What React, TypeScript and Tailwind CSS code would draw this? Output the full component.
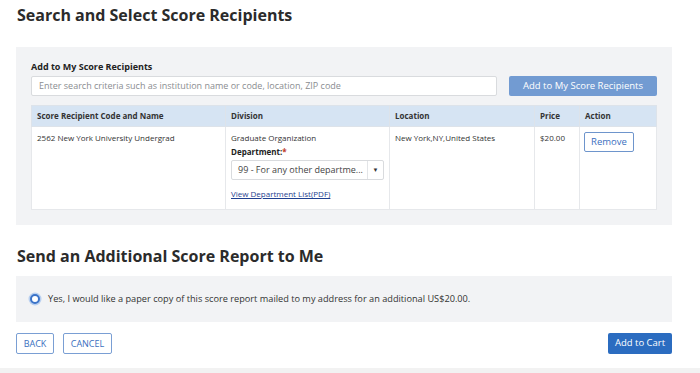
import React from 'react';

const font = { fontFamily: '"Open Sans", "Liberation Sans", sans-serif' };

const App: React.FC = () => {
  return (
    <div className="w-[700px] h-[373px] bg-white text-[#333] flex flex-col overflow-hidden" style={font}>
      <div className="px-4 flex flex-col">
        <h1 className="text-[16px] font-bold text-[#2b2b2b] pl-px pt-[4px] leading-[22px]">Search and Select Score Recipients</h1>

        <div className="mt-[21px] bg-[#f2f3f5] px-[15px] pt-[13px] pb-[15px] w-[656px]">
          <label className="block text-[9px] font-bold text-[#222] leading-[14px]">Add to My Score Recipients</label>
          <div className="flex items-center gap-3 mt-[2px]">
            <div className="w-[466px] h-[20px] bg-white border border-[#d9dbde] rounded-[2px] flex items-center px-[7px] text-[9px] text-[#8a8d91]">
              Enter search criteria such as institution name or code, location, ZIP code
            </div>
            <button className="w-[148px] h-[20px] bg-[#729bd2] rounded-[2px] text-white text-[9.5px] flex items-center justify-center">
              Add to My Score Recipients
            </button>
          </div>

          <table className="mt-[9px] w-[626px] border-collapse bg-white text-[8px] text-[#333]">
            <thead>
              <tr className="bg-[#d6e4f3] h-[21px] text-left">
                <th className="w-[194px] border border-[#dde3ea] px-[5px] font-bold">Score Recipient Code and Name</th>
                <th className="w-[163px] border border-[#dde3ea] px-[5px] font-bold">Division</th>
                <th className="w-[145px] border border-[#dde3ea] px-[5px] font-bold">Location</th>
                <th className="w-[45px] border border-[#dde3ea] px-[5px] font-bold">Price</th>
                <th className="border border-[#dde3ea] px-[5px] font-bold">Action</th>
              </tr>
            </thead>
            <tbody>
              <tr className="align-top">
                <td className="border border-[#e6e8eb] px-[5px] pt-[5px] h-[83px]">2562 New York University Undergrad</td>
                <td className="border border-[#e6e8eb] px-[5px] pt-[5px]">
                  <div>Graduate Organization</div>
                  <div className="font-bold mt-[2px] text-[#222]">
                    Department:<span className="text-[#c0392b]">*</span>
                  </div>
                  <div className="mt-[2px] w-[153px] h-[20px] border border-[#d9dbde] rounded-[2px] flex items-center text-[9px] text-[#444]">
                    <span className="flex-1 pl-[6px] whitespace-nowrap overflow-hidden">99 - For any other departme...</span>
                    <span className="w-[16px] h-full border-l border-[#e3e5e8] flex items-center justify-center text-[6px] text-[#333]">▼</span>
                  </div>
                  <a className="block mt-[8px] text-[8px] text-[#1f3f8f] underline">View Department List(PDF)</a>
                </td>
                <td className="border border-[#e6e8eb] px-[5px] pt-[5px]">New York,NY,United States</td>
                <td className="border border-[#e6e8eb] px-[5px] pt-[5px]">$20.00</td>
                <td className="border border-[#e6e8eb] px-[4px] pt-[5px]">
                  <button className="w-[50px] h-[20px] border border-[#6e95cc] rounded-[2px] text-[9.5px] text-[#3a6fc0] flex items-center justify-center">
                    Remove
                  </button>
                </td>
              </tr>
            </tbody>
          </table>
        </div>

        <h2 className="mt-[20px] text-[16px] font-bold text-[#2b2b2b] pl-px leading-[22px]">Send an Additional Score Report to Me</h2>

        <div className="mt-[9px] bg-[#f2f3f5] h-[46px] w-[656px] flex items-center px-[14px] gap-[8px] text-[9.2px] text-[#333]">
          <span className="w-[10px] h-[10px] rounded-full bg-white border-2 border-[#3b73c8] shadow-[0_0_0_1.5px_#b9d0f0]" />
          <span>Yes, I would like a paper copy of this score report mailed to my address for an additional US$20.00.</span>
        </div>

        <div className="mt-[11px] flex items-center w-[656px]">
          <button className="h-[21px] w-[38px] border border-[#7a9fd4] rounded-[2px] text-[9px] text-[#3a6fc0] flex items-center justify-center">BACK</button>
          <button className="ml-[9px] h-[21px] w-[49px] border border-[#7a9fd4] rounded-[2px] text-[9px] text-[#3a6fc0] flex items-center justify-center">CANCEL</button>
          <button className="ml-auto h-[21px] w-[64px] bg-[#2b6cc0] rounded-[2px] text-[9.5px] text-white flex items-center justify-center">Add to Cart</button>
        </div>
      </div>
      <div className="mt-auto h-[5px] bg-[#f2f2f2]" />
    </div>
  );
};

export default App;
